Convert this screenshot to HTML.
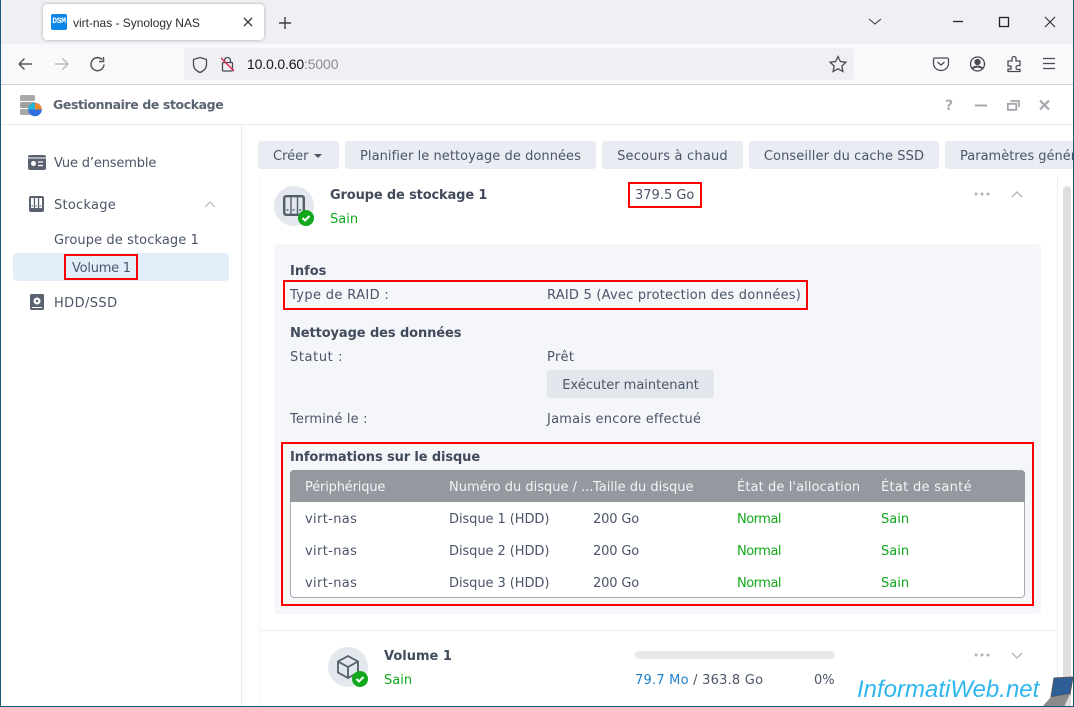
<!DOCTYPE html>
<html><head><meta charset="utf-8"><style>
*{box-sizing:border-box}
html,body{margin:0;padding:0}
body{width:1074px;height:707px;overflow:hidden;position:relative;background:#fff;font-family:"DejaVu Sans",sans-serif;font-size:13px;color:#4a5568}
.t{position:absolute;white-space:nowrap;line-height:16px;margin-top:2px}
.t.ui{margin-top:0}
.b{font-weight:bold;color:#414b5c}
.g{color:#12a81b}
.r{position:absolute;border:2px solid #f00}
.btn{position:absolute;background:#e9edf3;border-radius:3px;height:28px;line-height:32px;text-align:center;white-space:nowrap;color:#4a5568;overflow:hidden}
.ui{font-family:"Liberation Sans",sans-serif}
svg{position:absolute;overflow:visible}
.n{letter-spacing:.35px}.d{letter-spacing:-.07px}.o{letter-spacing:-.15px}.m{letter-spacing:-.5px}
</style></head><body>
<!-- browser chrome -->
<div style="position:absolute;left:0;top:0;width:1074px;height:44px;background:#f0f0f4"></div>
<div style="position:absolute;left:0;top:44px;width:1074px;height:40px;background:#f9f9fb"></div>
<div style="position:absolute;left:0;top:84px;width:1074px;height:1px;background:#cfcfd8"></div>
<div style="position:absolute;left:43px;top:4px;width:221px;height:36px;background:#fff;border-radius:4px;box-shadow:0 0 3px rgba(0,0,0,.3)"></div>
<div style="position:absolute;left:51px;top:14px;width:16px;height:16px;background:#0d86e8;border-radius:2px;color:#fff;font:bold 8px/16px 'Liberation Mono',monospace;text-align:center;letter-spacing:-.3px">DSM</div>
<div class="t ui" style="left:73px;top:15px;font-size:12px;letter-spacing:-.02px;color:#2b2a33">virt-nas - Synology NAS</div>
<svg style="left:0;top:0" width="1074" height="85" fill="none" stroke="#3d3d45" stroke-width="1.3">
<path d="M244 18l8 8M252 18l-8 8"/>
<path d="M285 17v12M279 23h12" stroke-width="1.4"/>
<path d="M869 19l6 5 6-5" stroke-width="1.1"/>
<path d="M953 21.500h10" stroke="#222"/>
<rect x="999.500" y="17.500" width="9" height="9" stroke="#222"/>
<path d="M1045 17l10 10M1055 17l-10 10" stroke="#222" stroke-width="1"/>
<path d="M32 64H19M19 64l5.500-5.500M19 64l5.500 5.500" stroke="#555" stroke-width="1.500"/>
<path d="M55 64h13M68 64l-5.500-5.500M68 64l-5.500 5.500" stroke="#bbb" stroke-width="1.500"/>
<path d="M102 59.500A6.500 6.500 0 1 0 104 64.500M103.500 57v4.500H99" stroke="#555" stroke-width="1.500"/>
</svg>
<div style="position:absolute;left:184px;top:48px;width:670px;height:32px;background:#f0f0f4;border-radius:4px"></div>
<svg style="left:0;top:0" width="1074" height="85" fill="none" stroke="#4a4a52" stroke-width="1.300">
<path d="M200 57.500l6.500 2v5c0 4-3 6.500-6.500 8-3.500-1.500-6.500-4-6.500-8v-5z"/>
<rect x="222.500" y="62.500" width="10" height="8.500" rx="1"/>
<path d="M224.500 62.500v-2a3 3 0 0 1 6 0v2"/>
<path d="M221 58l13 13" stroke="#e22850"/>
<path d="M838 56.500l2.400 5 5.500.7-4 3.800 1 5.500-4.900-2.700-4.900 2.700 1-5.500-4-3.800 5.500-.7z"/>
<path d="M935 58h12a1.500 1.500 0 0 1 1.500 1.500v4a7.500 7 0 0 1-15 0v-4A1.500 1.500 0 0 1 935 58zM937.500 62l3.500 3 3.500-3"/>
<circle cx="977.500" cy="64" r="7"/><circle cx="977.500" cy="62" r="2.500" fill="#4a4a52"/><path d="M972.500 68.500c2-2.500 8-2.500 10 0" stroke-width="2"/>
<path d="M1008 61h4v-2.500a2 2 0 0 1 4 0V61h4v4.500h-2a2 2 0 0 0 0 4h2V71.500h-12v-2.500h3v-3h-3z"/>
<path d="M1043 58.500h12M1043 63.500h12M1043 68.500h12" stroke-width="1.200"/>
</svg>
<div class="t ui" style="left:247px;top:56px;font-size:14px;letter-spacing:-.15px;color:#15141a">10.0.0.60<span style="color:#8a8a92">:5000</span></div>

<!-- app window header -->
<div style="position:absolute;left:0;top:124px;width:1074px;height:1px;background:#e8ebef"></div>
<div style="position:absolute;left:241px;top:125px;width:1px;height:582px;background:#e8ebef"></div>
<svg style="left:20px;top:95px" width="24" height="22">
<rect x="0" y="0" width="15" height="6" rx="1.500" fill="#a8a8a8"/><rect x="0" y="7" width="15" height="6" rx="1.500" fill="#a0a0a0"/><rect x="0" y="14" width="15" height="6" rx="1.500" fill="#a8a8a8"/>
<circle cx="15" cy="14.500" r="6.800" fill="#2f6fe0"/><path d="M15 14.500V7.700a6.800 6.800 0 0 1 6.800 6.800z" fill="#f08a2c"/><path d="M15 14.500H8.200A6.800 6.800 0 0 1 15 7.700z" fill="#25b7d3"/>
</svg>
<div class="t" style="left:53px;top:95px;font-weight:bold;font-size:12.500px;letter-spacing:-.4px;color:#5b6472">Gestionnaire de stockage</div>
<div class="t" style="left:945px;top:96px;font-size:14px;color:#a9adb3;font-weight:bold">?</div>
<svg style="left:0;top:90px" width="1074" height="30" fill="none" stroke="#a3a7ad" stroke-width="2">
<path d="M975 15.500h12"/>
<path d="M1007.800 13.800h8.500v6h-8.500zM1010.500 11h8.500v6"  stroke-width="1.800"/>
<path d="M1040 10.500l9 9M1049 10.500l-9 9" stroke-width="2.200"/>
</svg>

<!-- sidebar -->
<svg style="left:28px;top:155px" width="20" height="16"><rect width="18" height="15" rx="2" fill="#5a6270"/><circle cx="5.500" cy="8.500" r="2.500" fill="#fff"/><path d="M10 7h5M10 10.500h5" stroke="#fff" stroke-width="1.300"/><path d="M0 3h18" stroke="#fff" stroke-width="1"/></svg>
<div class="t o" style="left:54px;top:154px">Vue d’ensemble</div>
<svg style="left:29px;top:196px" width="16" height="16"><rect width="15" height="16" rx="2" fill="#5a6270"/><path d="M2 2h2.800v10H2zM6.100 2h2.800v10H6.100zM10.200 2h2.800v10h-2.800z" fill="#fff"/><path d="M2.500 10h1.600M6.600 10h1.600M10.700 10h1.600" stroke="#5a6270"/></svg>
<div class="t" style="left:54px;top:196px;letter-spacing:.25px">Stockage</div>
<svg style="left:204px;top:200px" width="12" height="8" fill="none"><path d="M1 7l5-5 5 5" stroke="#c5c9ce" stroke-width="1.500"/></svg>
<div class="t" style="left:54px;top:231px;letter-spacing:.1px">Groupe de stockage 1</div>
<div style="position:absolute;left:13px;top:253px;width:216px;height:28px;background:#e3eefb;border-radius:4px"></div>
<div class="t" style="left:72px;top:259px;letter-spacing:-.25px">Volume 1</div>
<div class="r" style="left:64px;top:254px;width:74px;height:26px"></div>
<svg style="left:30px;top:294px" width="14" height="16"><rect width="14" height="16" rx="1.500" fill="#5a6270"/><circle cx="7" cy="7" r="3.500" fill="#fff"/><circle cx="7" cy="7" r="1.200" fill="#5a6270"/><path d="M2 13.500h10" stroke="#fff"/></svg>
<div class="t" style="left:54px;top:294px;letter-spacing:.4px">HDD/SSD</div>

<!-- toolbar -->
<div class="btn" style="left:258px;top:141px;width:81px;text-align:left;padding-left:15px">Créer</div>
<div style="position:absolute;left:314px;top:154px;width:0;height:0;border:4px solid transparent;border-top:4px solid #4a5568;border-bottom:0"></div>
<div class="btn" style="left:345px;top:141px;width:251px;letter-spacing:.06px">Planifier le nettoyage de données</div>
<div class="btn" style="left:602px;top:141px;width:141px;letter-spacing:.2px">Secours à chaud</div>
<div class="btn" style="left:749px;top:141px;width:190px;letter-spacing:.09px">Conseiller du cache SSD</div>
<div class="btn" style="left:945px;top:141px;width:160px;text-align:left;padding-left:15px">Paramètres généraux</div>

<!-- panel -->
<div style="position:absolute;left:259px;top:176px;width:1px;height:531px;background:#f3f4f6"></div>
<div style="position:absolute;left:1057px;top:176px;width:1px;height:531px;background:#eceef1"></div>
<div style="position:absolute;left:1063px;top:186px;width:8px;height:521px;background:#dedede;border-radius:4px 4px 0 0"></div>

<div style="position:absolute;left:274px;top:186px;width:40px;height:40px;border-radius:50%;background:#e3e8ef"></div>
<svg style="left:283px;top:195px" width="32" height="32"><rect x="1.200" y="1.200" width="19.600" height="18.600" rx="2" fill="none" stroke="#555d6b" stroke-width="2.400"/><path d="M8 2v17M14.500 2v17" stroke="#555d6b" stroke-width="1.400"/><path d="M3.500 15h2M9.500 15h2M16 15h2" stroke="#555d6b" stroke-width="1.400"/><circle cx="23" cy="23" r="8" fill="#12a81b"/><path d="M19.500 23l2.500 2.500 4.500-4.500" fill="none" stroke="#fff" stroke-width="2"/></svg>
<div class="t b" style="left:330px;top:186px;letter-spacing:-.15px">Groupe de stockage 1</div>
<div class="t g" style="left:330px;top:210px">Sain</div>
<div class="t" style="left:635px;top:186px">379.5 Go</div>
<div class="r" style="left:628px;top:182px;width:74px;height:26px"></div>
<svg style="left:974px;top:190px" width="52" height="10" fill="none"><g fill="#aeb2b8"><circle cx="2" cy="4" r="1.500"/><circle cx="8" cy="4" r="1.500"/><circle cx="14" cy="4" r="1.500"/></g><path d="M38 7l5-5 5 5" stroke="#b5b9bf" stroke-width="1.500"/></svg>

<div style="position:absolute;left:274px;top:244px;width:767px;height:370px;background:#f4f6fa;border-radius:4px"></div>
<div class="t b" style="left:290px;top:262px">Infos</div>
<div class="t" style="left:290px;top:286px;letter-spacing:.36px">Type de RAID :</div>
<div class="t" style="left:547px;top:286px;letter-spacing:.22px">RAID 5 (Avec protection des données)</div>
<div class="r" style="left:283px;top:280px;width:525px;height:30px"></div>
<div class="t b" style="left:290px;top:324px;letter-spacing:-.1px">Nettoyage des données</div>
<div class="t" style="left:290px;top:348px;letter-spacing:.6px">Statut :</div>
<div class="t" style="left:547px;top:348px;letter-spacing:.4px">Prêt</div>
<div class="btn" style="left:547px;top:370px;width:167px;background:#e3e7ed">Exécuter maintenant</div>
<div class="t" style="left:290px;top:410px;letter-spacing:.17px">Terminé le :</div>
<div class="t" style="left:547px;top:410px;letter-spacing:.23px">Jamais encore effectué</div>
<div class="t b" style="left:290px;top:448px;letter-spacing:-.12px">Informations sur le disque</div>

<!-- table -->
<div style="position:absolute;left:290px;top:470px;width:735px;height:128px;background:#fff;border:1px solid #a5a9af;border-radius:4px"></div>
<div style="position:absolute;left:290px;top:470px;width:735px;height:32px;background:#94989f;border-radius:4px 4px 0 0"></div>
<div class="t" style="left:305px;top:478px;color:#f3f4f6;letter-spacing:-.17px">Périphérique</div>
<div class="t" style="left:449px;top:478px;color:#f3f4f6">Numéro du disque / ...</div>
<div class="t" style="left:593px;top:478px;color:#f3f4f6">Taille du disque</div>
<div class="t" style="left:737px;top:478px;color:#f3f4f6;letter-spacing:.1px">État de l'allocation</div>
<div class="t" style="left:881px;top:478px;color:#f3f4f6;letter-spacing:.3px">État de santé</div>

<div class="t n" style="left:305px;top:510px">virt-nas</div><div class="t d" style="left:449px;top:510px">Disque 1 (HDD)</div><div class="t o" style="left:593px;top:510px">200 Go</div><div class="t g m" style="left:737px;top:510px">Normal</div><div class="t g" style="left:881px;top:510px">Sain</div>
<div class="t n" style="left:305px;top:542px">virt-nas</div><div class="t d" style="left:449px;top:542px">Disque 2 (HDD)</div><div class="t o" style="left:593px;top:542px">200 Go</div><div class="t g m" style="left:737px;top:542px">Normal</div><div class="t g" style="left:881px;top:542px">Sain</div>
<div class="t n" style="left:305px;top:574px">virt-nas</div><div class="t d" style="left:449px;top:574px">Disque 3 (HDD)</div><div class="t o" style="left:593px;top:574px">200 Go</div><div class="t g m" style="left:737px;top:574px">Normal</div><div class="t g" style="left:881px;top:574px">Sain</div>
<div class="r" style="left:281px;top:442px;width:753px;height:164px"></div>

<!-- volume row -->
<div style="position:absolute;left:260px;top:630px;width:797px;height:1px;background:#eceef1"></div>
<div style="position:absolute;left:328px;top:647px;width:40px;height:40px;border-radius:50%;background:#e3e8ef"></div>
<svg style="left:336px;top:655px" width="32" height="32" fill="none" stroke="#555d6b" stroke-width="1.800"><path d="M12 1l10 5.500v11L12 23 2 17.500v-11zM2 6.500L12 12l10-5.500M12 12v11"/><circle cx="24" cy="24" r="8" fill="#12a81b" stroke="none"/><path d="M20.500 24l2.500 2.500 4.500-4.500" stroke="#fff" stroke-width="2"/></svg>
<div class="t b" style="left:384px;top:647px">Volume 1</div>
<div class="t g" style="left:384px;top:671px">Sain</div>
<div style="position:absolute;left:635px;top:651px;width:200px;height:8px;background:#e8e9eb;border-radius:4px"></div>
<div class="t" style="left:635px;top:671px;letter-spacing:.22px"><span style="color:#1b7fcc">79.7 Mo</span> / 363.8 Go</div>
<div class="t" style="left:814px;top:671px">0%</div>
<svg style="left:974px;top:651px" width="52" height="10" fill="none"><g fill="#aeb2b8"><circle cx="2" cy="4" r="1.500"/><circle cx="8" cy="4" r="1.500"/><circle cx="14" cy="4" r="1.500"/></g><path d="M38 2l5 5 5-5" stroke="#b5b9bf" stroke-width="1.500"/></svg>

<!-- watermark -->
<div class="t ui" style="left:857px;top:676px;font-size:24px;line-height:28px;font-style:italic;color:#2fb6ef;text-shadow:0 0 2px #fff,0 0 2px #fff">InformatiWeb.net</div>
<svg style="left:1040px;top:676px" width="34" height="31"><path d="M14 2l19-1-3 17-19 3z" fill="#2d5f96" stroke="#555"/><path d="M11 21l19-3-6 13H2z" fill="#8b8b8b"/></svg>

<!-- window borders -->
<div style="position:absolute;left:0;top:0;width:1px;height:707px;background:#1d5a78"></div>
<div style="position:absolute;left:1073px;top:0;width:1px;height:707px;background:#1d5a78"></div>
<div style="position:absolute;left:0;top:706px;width:1074px;height:1px;background:#1d5a78"></div>
</body></html>
